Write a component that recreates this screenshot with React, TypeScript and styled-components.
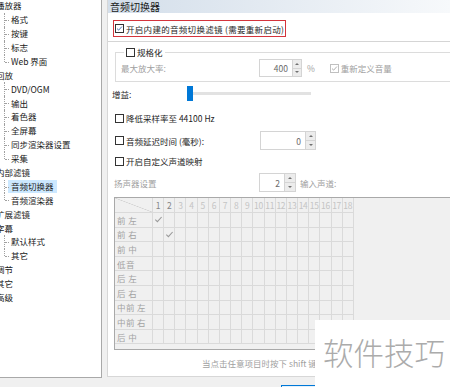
import React from 'react';
import styled, { createGlobalStyle } from 'styled-components';

const FONT = `"Noto Sans CJK SC", "Noto Sans", sans-serif`;

const GlobalStyle = createGlobalStyle`
  html, body { margin: 0; padding: 0; }
  body { background: #f0f0f0; width: 450px; height: 387px; overflow: hidden; font-family: ${FONT}; }
`;

const Window = styled.div`
  width: 450px;
  height: 387px;
  position: relative;
  display: flex;
  flex-direction: column;
  overflow: hidden;
  background: #f0f0f0;
  font-family: ${FONT};
  font-size: 8.5px;
  color: #1e1e1e;
`;

const Body = styled.div`
  display: flex;
  align-items: flex-start;
  height: 378px;
  flex: none;
`;

/* ---------- tree ---------- */
const TreePane = styled.div`
  width: 102px;
  height: 378px;
  box-sizing: border-box;
  background: #fff;
  border-right: 1px solid #a9a9a9;
  border-bottom: 1px solid #a9a9a9;
  overflow: hidden;
  flex: none;
`;

const TreeList = styled.div`
  display: flex;
  flex-direction: column;
  margin-top: -1px;
`;

const TreeRow = styled.div<{ $child?: boolean; $last?: boolean }>`
  position: relative;
  height: 13.9px;
  display: flex;
  align-items: center;
  white-space: nowrap;
  padding-left: ${(p) => (p.$child ? 8 : 0)}px;
  ${(p) =>
    p.$child
      ? `
    &::before {
      content: '';
      position: absolute;
      left: 4px;
      top: 0;
      bottom: ${p.$last ? '50%' : '0'};
      border-left: 1px dotted #a0a0a0;
    }
    &::after {
      content: '';
      position: absolute;
      left: 5px;
      top: 50%;
      width: 4px;
      border-top: 1px dotted #a0a0a0;
    }
  `
      : ''}
`;

const TreeLabel = styled.span<{ $top?: boolean; $selected?: boolean }>`
  display: block;
  line-height: 13.3px;
  padding: 0 ${(p) => (p.$top ? 0 : 3)}px;
  margin-left: ${(p) => (p.$top ? -4 : 0)}px;
  background: ${(p) => (p.$selected ? '#cce8ff' : 'transparent')};
  color: #1a1a1a;
`;

/* ---------- main pane ---------- */
const MainPane = styled.div`
  flex: 1;
  margin-left: 5px;
  height: 377px;
  box-sizing: border-box;
  border-left: 1px solid #d7d7d7;
  border-bottom: 1px solid #d7d7d7;
  background: #fff;
  display: flex;
  flex-direction: column;
  overflow: hidden;
`;

const Header = styled.div`
  flex: none;
  height: 13px;
  line-height: 13px;
  padding-left: 2px;
  font-size: 10px;
  color: #1a1a1a;
  background: linear-gradient(to right, #d3deea, #f7f9fb);
`;

const Highlight = styled.div`
  flex: none;
  margin: 7px 0 0 5px;
  width: 173px;
  height: 17px;
  box-sizing: border-box;
  border: 1px solid #d4343c;
  padding-left: 1px;
  display: flex;
  align-items: center;
  gap: 2px;
  white-space: nowrap;
`;

const Separator = styled.div`
  flex: none;
  height: 1px;
  margin-top: 4px;
  background: #d5d5d5;
`;

const Box = styled.span<{ $disabled?: boolean }>`
  flex: none;
  width: 9px;
  height: 9px;
  box-sizing: border-box;
  border: 1px solid ${(p) => (p.$disabled ? '#c0c0c0' : '#333')};
  background: #fff;
  display: flex;
  align-items: center;
  justify-content: center;
`;

const Text = styled.span<{ $muted?: boolean; $w?: number; $wide?: boolean }>`
  white-space: nowrap;
  color: ${(p) => (p.$muted ? '#a0a0a0' : '#1e1e1e')};
  ${(p) => (p.$w ? `width: ${p.$w}px; flex: none;` : '')}
  ${(p) => (p.$wide ? 'letter-spacing: 0.3px;' : '')}
`;

const Check = ({ color }: { color: string }) => (
  <svg width="9" height="9" viewBox="0 0 9 9" style={{ display: 'block' }}>
    <polyline points="1.3,4.6 3.4,6.6 7.6,2" fill="none" stroke={color} strokeWidth="1.1" />
  </svg>
);

const CheckBox = ({ checked, disabled, color }: { checked?: boolean; disabled?: boolean; color?: string }) => (
  <Box $disabled={disabled}>{checked && <Check color={color || '#2b5aa0'} />}</Box>
);

const Group = styled.fieldset`
  flex: none;
  margin: 4px -30px 0 7px;
  padding: 1px 0 4px 5px;
  border: 1px solid #dcdcdc;
  min-width: 0;
`;

const Legend = styled.legend`
  margin-left: 3px;
  padding: 0 2px;
  height: 12px;
  display: flex;
  align-items: center;
  gap: 2px;
`;

const Row = styled.div<{ $mt: number; $ml: number; $h: number }>`
  flex: none;
  display: flex;
  align-items: center;
  gap: 2px;
  margin-top: ${(p) => p.$mt}px;
  margin-left: ${(p) => p.$ml}px;
  height: ${(p) => p.$h}px;
`;

const SpinWrap = styled.div<{ $ml?: number }>`
  flex: none;
  display: flex;
  height: 100%;
  margin-left: ${(p) => p.$ml || 0}px;
`;

const SpinInput = styled.div<{ $w: number }>`
  width: ${(p) => p.$w}px;
  box-sizing: border-box;
  border: 1px solid #d4d4d4;
  border-right: none;
  display: flex;
  align-items: center;
  justify-content: flex-end;
  padding-right: 4px;
  color: #6a6a6a;
  background: #fff;
`;

const SpinButtons = styled.div<{ $w: number }>`
  width: ${(p) => p.$w}px;
  box-sizing: border-box;
  border: 1px solid #d4d4d4;
  display: flex;
  flex-direction: column;
`;

const SpinBtn = styled.div<{ $down?: boolean }>`
  flex: 1;
  background: #ececec;
  display: flex;
  align-items: center;
  justify-content: center;
  ${(p) => (p.$down ? 'border-top: 1px solid #d4d4d4;' : '')}
  &::after {
    content: '';
    width: 0;
    height: 0;
    border-left: 2px solid transparent;
    border-right: 2px solid transparent;
    ${(p) => (p.$down ? 'border-top: 2px solid #707070;' : 'border-bottom: 2px solid #707070;')}
  }
`;

const Spin = ({ value, w, bw, ml }: { value: string; w: number; bw: number; ml?: number }) => (
  <SpinWrap $ml={ml}>
    <SpinInput $w={w}>{value}</SpinInput>
    <SpinButtons $w={bw}>
      <SpinBtn />
      <SpinBtn $down />
    </SpinButtons>
  </SpinWrap>
);

const Slider = styled.div`
  flex: none;
  display: flex;
  align-items: center;
  height: 15px;
`;
const Thumb = styled.div`
  width: 6px;
  height: 15px;
  background: #0078d7;
`;
const Track = styled.div`
  width: 118px;
  height: 3px;
  background: #e2e2e2;
`;

const MapArea = styled.div`
  flex: none;
  margin: 5px -10px 0 6px;
  height: 153px;
  box-sizing: border-box;
  border-top: 1px solid #a9a9a9;
  border-left: 1px solid #a9a9a9;
  border-bottom: 1px solid #a9a9a9;
  background: #f0f0f0;
  display: flex;
`;

const MapGrid = styled.div`
  display: grid;
  grid-template-columns: 38px repeat(18, 11.17px);
  grid-template-rows: 15px repeat(9, 14.6px);
`;

const Cell = styled.div<{ $corner?: boolean; $tone?: 'dark' | 'light' | 'label' }>`
  box-sizing: border-box;
  border-right: 1px solid #dadada;
  border-bottom: 1px solid #dadada;
  display: flex;
  align-items: center;
  justify-content: ${(p) => (p.$tone === 'label' ? 'flex-start' : 'center')};
  padding-left: ${(p) => (p.$tone === 'label' ? 2 : 0)}px;
  white-space: pre;
  overflow: hidden;
  letter-spacing: ${(p) => (p.$tone === 'label' ? '0.4px' : '-0.3px')};
  color: ${(p) => (p.$tone === 'dark' ? '#858585' : p.$tone === 'label' ? '#a2a2a2' : '#c4c4c4')};
  font-size: 8.5px;
  ${(p) =>
    p.$corner
      ? 'background: linear-gradient(to top right, transparent calc(50% - 0.6px), #d0d0d0 50%, transparent calc(50% + 0.6px));'
      : ''}
`;

const Hint = styled.div`
  flex: none;
  margin: 7px 0 0 94px;
  height: 12px;
  line-height: 12px;
  color: #a0a0a0;
  white-space: nowrap;
`;

const Footer = styled.div`
  flex: none;
  display: flex;
  padding: 7px 0 0 281px;
`;

const Button = styled.div`
  width: 72px;
  height: 22px;
  box-sizing: border-box;
  border: 1px solid #0078d7;
  background: #e5f1fb;
`;

const Watermark = styled.div`
  position: absolute;
  left: 315px;
  top: 320px;
  right: 0;
  bottom: 0;
  background: #fff;
  display: flex;
  align-items: center;
  padding: 0 0 4px 8px;
  font-size: 30.5px;
  font-weight: 300;
  color: #ababab;
  white-space: nowrap;
  font-family: ${FONT};
`;

type Node = { label: string; children?: string[]; selected?: string };
const tree: Node[] = [
  { label: '播放器', children: ['格式', '按键', '标志', 'Web 界面'] },
  { label: '回放', children: ['DVD/OGM', '输出', '着色器', '全屏幕', '同步渲染器设置', '采集'] },
  { label: '内部滤镜', children: ['音频切换器', '音频渲染器'], selected: '音频切换器' },
  { label: '扩展滤镜' },
  { label: '字幕', children: ['默认样式', '其它'] },
  { label: '调节' },
  { label: '其它' },
  { label: '高级' },
];

const rows = ['前 左', '前 右', '前 中', '低音', '后 左', '后 右', '中前 左', '中前 右', '后 中'];

export default function App() {
  return (
    <Window>
      <GlobalStyle />
      <Body>
        <TreePane>
          <TreeList>
            {tree.map((n) => (
              <React.Fragment key={n.label + (n.children ? n.children.length : 0)}>
                <TreeRow>
                  <TreeLabel $top>{n.label}</TreeLabel>
                </TreeRow>
                {n.children?.map((c, i) => (
                  <TreeRow key={c} $child $last={i === n.children!.length - 1}>
                    <TreeLabel $selected={n.selected === c}>{c}</TreeLabel>
                  </TreeRow>
                ))}
              </React.Fragment>
            ))}
          </TreeList>
        </TreePane>

        <MainPane>
          <Header>音频切换器</Header>
          <Highlight>
            <CheckBox checked />
            <Text $wide>开启内建的音频切换滤镜 (需要重新启动)</Text>
          </Highlight>
          <Separator />

          <Group>
            <Legend>
              <CheckBox />
              <Text>规格化</Text>
            </Legend>
            <Row $mt={0} $ml={0} $h={18}>
              <Text $muted $w={136}>最大放大率:</Text>
              <Spin value="400" w={33} bw={10} />
              <Text $muted style={{ marginLeft: 3 }}>%</Text>
              <span style={{ width: 11 }} />
              <CheckBox checked disabled color="#a0a0a0" />
              <Text $muted>重新定义音量</Text>
            </Row>
          </Group>

          <Row $mt={4} $ml={4} $h={15}>
            <Text $w={73}>增益:</Text>
            <Slider>
              <Thumb />
              <Track />
            </Slider>
          </Row>

          <Row $mt={10} $ml={7} $h={14}>
            <CheckBox />
            <Text>降低采样率至 44100 Hz</Text>
          </Row>

          <Row $mt={6} $ml={7} $h={19}>
            <CheckBox />
            <Text $w={132}>音频延迟时间 (毫秒):</Text>
            <Spin value="0" w={45} bw={11} />
          </Row>

          <Row $mt={4} $ml={7} $h={14}>
            <CheckBox />
            <Text>开启自定义声道映射</Text>
          </Row>

          <Row $mt={5} $ml={6} $h={19}>
            <Text $muted $w={143}>扬声器设置</Text>
            <Spin value="2" w={25} bw={12} />
            <Text $muted style={{ marginLeft: 2 }}>输入声道:</Text>
          </Row>

          <MapArea>
            <MapGrid>
              <Cell $corner />
              {Array.from({ length: 18 }, (_, i) => (
                <Cell key={'h' + i} $tone={i < 2 ? 'dark' : 'light'}>
                  {i + 1}
                </Cell>
              ))}
              {rows.map((r, ri) => (
                <React.Fragment key={r}>
                  <Cell $tone="label">{r}</Cell>
                  {Array.from({ length: 18 }, (_, ci) => (
                    <Cell key={ci}>{ri < 2 && ci === ri ? <Check color="#9a9a9a" /> : null}</Cell>
                  ))}
                </React.Fragment>
              ))}
            </MapGrid>
          </MapArea>

          <Hint>当点击任意项目时按下 shift 键</Hint>
        </MainPane>
      </Body>
      <Footer>
        <Button />
      </Footer>
      <Watermark>软件技巧</Watermark>
    </Window>
  );
}
